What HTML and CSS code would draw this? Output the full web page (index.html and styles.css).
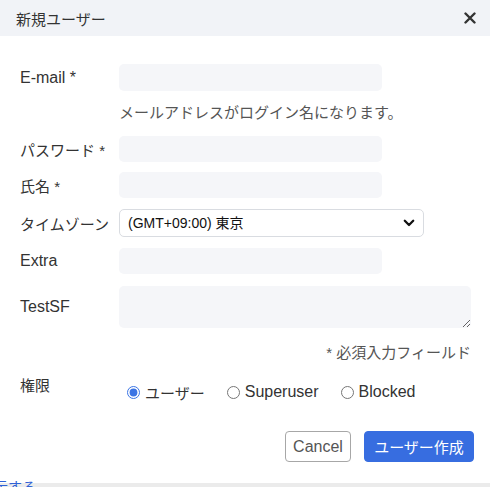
FILE: index.html
```html
<!DOCTYPE html>
<html lang="ja">
<head>
<meta charset="utf-8">
<link rel="stylesheet" href="styles.css">
</head>
<body>
<div class="modal">
  <div class="modal-header">
    <span class="title ja">新規ユーザー</span>
    <span class="close">
      <svg width="12" height="12" viewBox="0 0 12 12"><path d="M1.5 1.5 L10.5 10.5 M10.5 1.5 L1.5 10.5" stroke="#333" stroke-width="2.4" stroke-linecap="round" fill="none"/></svg>
    </span>
  </div>
  <div class="modal-body">
    <div class="row row-email">
      <label class="lbl">E-mail *</label>
      <input class="field w263" type="text">
    </div>
    <div class="help ja">メールアドレスがログイン名になります。</div>
    <div class="row row-pw">
      <label class="lbl ja">パスワード *</label>
      <input class="field w263" type="password">
    </div>
    <div class="row row-name">
      <label class="lbl ja">氏名 *</label>
      <input class="field w263" type="text">
    </div>
    <div class="row row-tz">
      <label class="lbl ja">タイムゾーン</label>
      <div class="select-wrap">
        <select class="select"><option>(GMT+09:00) 東京</option></select>
        <svg class="chev" width="12" height="8" viewBox="0 0 12 8"><path d="M1.8 1.8 L6 6 L10.2 1.8" stroke="#111" stroke-width="2.3" stroke-linecap="round" stroke-linejoin="round" fill="none"/></svg>
      </div>
    </div>
    <div class="row row-extra">
      <label class="lbl">Extra</label>
      <input class="field w263" type="text">
    </div>
    <div class="row row-sf">
      <label class="lbl">TestSF</label>
      <textarea class="field area"></textarea>
    </div>
    <div class="note ja">* 必須入力フィールド</div>
    <div class="row-role">
      <label class="lbl ja role-lbl">権限</label>
      <div class="radios">
        <label class="opt"><input type="radio" name="role" checked><span class="ja">ユーザー</span></label>
        <label class="opt"><input type="radio" name="role"><span>Superuser</span></label>
        <label class="opt"><input type="radio" name="role"><span>Blocked</span></label>
      </div>
    </div>
    <div class="actions">
      <button class="btn btn-cancel">Cancel</button>
      <button class="btn btn-primary ja">ユーザー作成</button>
    </div>
  </div>
</div>
<div class="page-strip"></div>
<span class="behind-link ja">示する</span>
</body>
</html>
```

FILE: styles.css
```css
html, body {
  margin: 0;
  padding: 0;
}
body {
  width: 490px;
  height: 487px;
  overflow: hidden;
  position: relative;
  background: #ffffff;
  font-family: "Liberation Sans", "Noto Sans CJK JP", sans-serif;
  font-size: 16px;
  color: #333;
}
.ja {
  font-size: 15px;
  letter-spacing: 0;
}
.modal {
  background: #fff;
  height: 483px;
  display: flex;
  flex-direction: column;
}
.modal-header {
  height: 36px;
  background: #f1f3f7;
  display: flex;
  align-items: center;
  justify-content: space-between;
  padding: 0 14px 0 16px;
}
.title {
  color: #333;
}
.close {
  display: flex;
  align-items: center;
}
.modal-body {
  padding: 28px 16px 0 20px;
  display: flex;
  flex-direction: column;
}
.row {
  display: flex;
  align-items: center;
}
.lbl {
  width: 99px;
  flex: none;
  color: #333;
}
.field {
  box-sizing: border-box;
  border: none;
  background: #f5f6f9;
  border-radius: 5px;
  margin: 0;
  padding: 0 8px;
  font: inherit;
}
.w263 {
  width: 263px;
}
.row-email .field { height: 27px; }
.help {
  margin: 12px 0 0 99px;
  line-height: 20px;
  height: 20px;
  color: #555;
}
.row-pw { margin-top: 13px; }
.row-pw .field { height: 26px; }
.row-name { margin-top: 10px; }
.row-name .field { height: 26px; }
.row-tz { margin-top: 11px; }
.select-wrap {
  position: relative;
  width: 305px;
  height: 28px;
}
.select {
  appearance: none;
  -webkit-appearance: none;
  box-sizing: border-box;
  width: 305px;
  height: 28px;
  border: 1px solid #d9dce1;
  border-radius: 5px;
  background: #fff;
  padding: 0 8px;
  font-family: "Liberation Sans", "Noto Sans CJK JP", sans-serif;
  font-size: 14px;
  color: #111;
  margin: 0;
}
.chev {
  position: absolute;
  right: 9px;
  top: 10px;
}
.row-extra { margin-top: 11px; }
.row-extra .field { height: 26px; }
.row-sf { margin-top: 12px; }
.area {
  width: 352px;
  height: 42px;
  resize: both;
  display: block;
}
.note {
  margin-top: 15px;
  width: 451px;
  text-align: right;
  line-height: 20px;
  height: 20px;
  color: #555;
}
.row-role {
  margin-top: 13px;
  display: flex;
  align-items: flex-start;
}
.role-lbl {
  line-height: 20px;
}
.radios {
  display: flex;
  align-items: center;
  margin-top: 6px;
  height: 20px;
  padding-left: 8px;
}
.opt {
  display: flex;
  align-items: center;
  margin-right: 22px;
  color: #333;
}
.opt input {
  width: 13px;
  height: 13px;
  margin: 0 5px 0 0;
  accent-color: #3b74e4;
}
.actions {
  margin-top: 29px;
  display: flex;
  justify-content: flex-end;
  gap: 13px;
}
.btn {
  height: 31px;
  box-sizing: border-box;
  border-radius: 4px;
  font-family: "Liberation Sans", "Noto Sans CJK JP", sans-serif;
  padding: 0;
  margin: 0;
}
.btn-cancel {
  width: 66px;
  background: #fff;
  border: 1px solid #a7a7a7;
  color: #555;
  font-size: 16px;
}
.btn-primary {
  width: 110px;
  background: #376de0;
  border: 1px solid #376de0;
  color: #fff;
}
.page-strip {
  height: 4px;
  background: #ebebeb;
}
.behind-link {
  position: absolute;
  left: -6px;
  bottom: -9px;
  color: #2f62d6;
  font-size: 14px;
}
```
